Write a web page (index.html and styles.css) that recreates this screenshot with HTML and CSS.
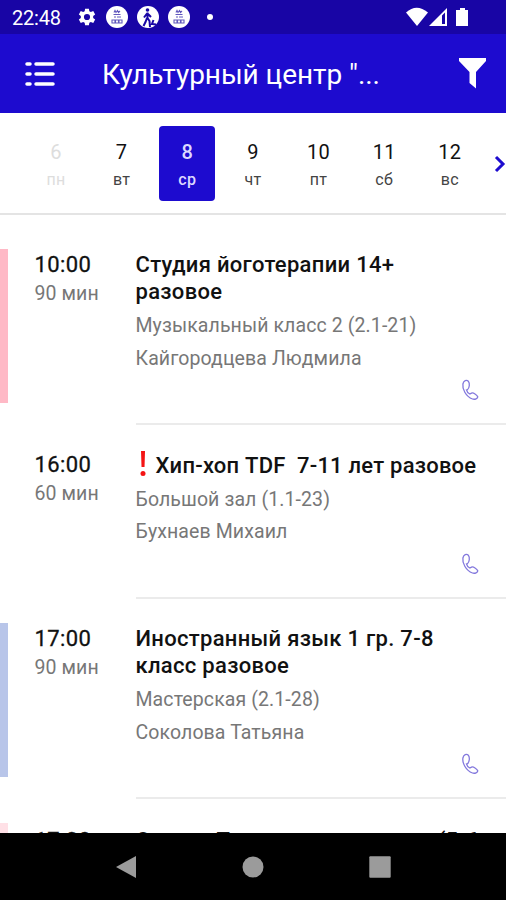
FILE: index.html
```html
<!DOCTYPE html>
<html lang="ru">
<head>
<meta charset="utf-8">
<title>Расписание</title>
<link rel="stylesheet" href="styles.css">
</head>
<body>
<svg class="defs" aria-hidden="true">
  <symbol id="phone" viewBox="0 0 18 22"><path d="M6.200 11C8.600 9 9 4.500 7.300 2.200C5.600.4 2.600 1.600 1.900 5C1.200 9.500 4.500 17.500 11.500 20C14 20.800 16.800 19.400 16.800 17.800C15.800 15.800 12.500 13.400 10.500 14.100L8.800 15C7.200 14.300 5.800 12.500 5.200 10.400" /></symbol>
  <symbol id="badge" viewBox="0 0 22 22"><circle cx="11" cy="11" r="11" fill="#fff"/><path d="M8 6.500l1-2 1 2 1.500-2 1 2 1.500-1.500M7.500 8.500h7M8 11h2m1 0h4M6 14h3v3H6zm3.500 0h3v3h-3zm3.500 0h3v3h-3z"/></symbol>
</svg>
<div class="screen">
  <div class="status">
    <span class="clock">22:48</span>
    <svg class="gear" viewBox="0 0 24 24"><path fill-rule="evenodd" d="M9.700 2h4.600l.5 3 1.800 1 2.900-1.100 2.300 4-2.400 1.900v2.400l2.400 1.900-2.300 4-2.900-1.100-1.800 1-.5 3H9.700l-.5-3-1.800-1-2.900 1.100-2.300-4 2.400-1.900v-2.400L2.200 8.900l2.300-4L7.400 6l1.800-1zM12 8.300a3.700 3.700 0 1 0 0 7.400 3.700 3.700 0 0 0 0-7.400z"/></svg>
    <svg class="badge"><use href="#badge"/></svg>
    <svg class="badge" viewBox="0 0 22 22"><circle cx="11" cy="11" r="11" fill="#fff"/><circle class="ink" cx="10.500" cy="4" r="1.800"/><path class="walker" d="M10.500 6.500v5.500l2 3 .5 6M10 12l-1.500 4-2 4M10 7.500l-3 4M11 8l3 3M16.500 14l-1.500 4 4 .5"/></svg>
    <svg class="badge"><use href="#badge"/></svg>
    <i class="dot"></i>
    <svg class="signals" viewBox="0 0 64 20"><path d="M0 5.500Q10.500-4.200 22 5.500L11 19z"/><path fill-rule="evenodd" d="M23 19L41 1v18zM36 8.500V17h3V5.500z"/><path d="M51 3h3V1h5v2h3v16H50V3z"/></svg>
  </div>
  <header class="bar">
    <svg class="menu" viewBox="0 0 30 24"><path d="M2 2h3M11 2h17M2 12h3M11 12h17M2 22h3M11 22h17"/></svg>
    <h1>Культурный центр "...</h1>
    <svg class="filter" viewBox="0 0 27 31"><path d="M0 0h27v3L17 14v16.500L10.500 25V14L0 3z"/></svg>
  </header>
  <nav class="days">
    <div class="day off"><b>6</b><span>пн</span></div>
    <div class="day"><b>7</b><span>вт</span></div>
    <div class="day on"><b>8</b><span>ср</span></div>
    <div class="day"><b>9</b><span>чт</span></div>
    <div class="day"><b>10</b><span>пт</span></div>
    <div class="day"><b>11</b><span>сб</span></div>
    <div class="day"><b>12</b><span>вс</span></div>
    <svg class="next" viewBox="0 0 12 18"><path d="M2 2l7 7-7 7"/></svg>
  </nav>
  <main class="list">
    <article class="item">
      <i class="mark pink"></i>
      <div class="when"><time>10:00</time><span>90 мин</span></div>
      <div class="info"><h2>Студия йоготерапии 14+<br>разовое</h2><p>Музыкальный класс 2 (2.1-21)</p><p>Кайгородцева Людмила</p><svg class="phone"><use href="#phone"/></svg></div>
    </article>
    <article class="item">
      <i class="mark"></i>
      <div class="when"><time>16:00</time><span>60 мин</span></div>
      <div class="info"><h2 class="flagged"><svg class="alert" viewBox="0 0 6 25"><path d="M1 0h4l-.5 16h-3z"/><circle cx="3" cy="22.500" r="2.500"/></svg>Хип-хоп TDF&nbsp; 7-11 лет разовое</h2><p>Большой зал (1.1-23)</p><p>Бухнаев Михаил</p><svg class="phone"><use href="#phone"/></svg></div>
    </article>
    <article class="item">
      <i class="mark blue"></i>
      <div class="when"><time>17:00</time><span>90 мин</span></div>
      <div class="info"><h2>Иностранный язык 1 гр. 7-8<br>класс разовое</h2><p>Мастерская (2.1-28)</p><p>Соколова Татьяна</p><svg class="phone"><use href="#phone"/></svg></div>
    </article>
    <article class="item last">
      <i class="mark rose"></i>
      <div class="when"><time>17:30</time></div>
      <div class="info"><h2 class="spread"><span>Студия Танца</span><span>(5-6</span></h2></div>
    </article>
  </main>
  <footer class="system">
    <svg viewBox="0 0 22 24"><path d="M21 1v22L1 12z"/></svg>
    <svg viewBox="0 0 22 24"><circle cx="11" cy="12" r="10.500"/></svg>
    <svg viewBox="0 0 22 24"><rect x=".3" y="1.300" width="21.400" height="21.400" rx="1"/></svg>
  </footer>
</div>
</body>
</html>
```
FILE: styles.css
```css
* { box-sizing: border-box; }
body { margin: 0; font-family: Roboto, "Liberation Sans", sans-serif; color: #111; background: #fff; }
h1, h2, p { margin: 0; font-weight: 400; }
svg { display: block; flex: none; }
.defs { position: absolute; width: 0; height: 0; }
.screen { width: 506px; height: 900px; display: flex; flex-direction: column; overflow: hidden; }

.status { height: 34px; flex: none; background: #1805a5; color: #fff; display: flex; align-items: center; padding-left: 12px; }
.clock { width: 65px; font-size: 20px; letter-spacing: -0.2px; line-height: 36px; padding-top: 2px; }
.gear { width: 20px; height: 20px; fill: #fff; margin-right: 9px; }
.badge { width: 22px; height: 22px; margin-right: 9px; }
#badge path { fill: none; stroke: #6158bd; stroke-width: 1.1; }
.badge .ink { fill: #1805a5; }
.badge .walker { fill: none; stroke: #1805a5; stroke-width: 2; }
.dot { width: 6px; height: 6px; border-radius: 3px; background: #fff; margin-left: 8px; }
.signals { width: 64px; height: 20px; margin-left: auto; margin-right: 36px; fill: #fff; }

.bar { height: 79px; flex: none; background: #1d0bcf; color: #fff; display: flex; align-items: center; padding: 0 20px 0 25px; }
.menu { width: 30px; height: 24px; fill: none; stroke: #fff; stroke-width: 3.500; stroke-linecap: round; }
.bar h1 { margin-left: 47px; font-size: 28px; line-height: 40px; padding-top: 2px; letter-spacing: -.05px; white-space: nowrap; }
.filter { width: 27px; height: 31px; margin-left: auto; fill: #fff; }

.days { height: 102px; flex: none; display: flex; gap: 9.650px; padding: 13px 0 0 28px; border-bottom: 2px solid #e4e4e4; }
.day { width: 56px; height: 75px; flex: none; border-radius: 4px; display: flex; flex-direction: column; align-items: center; padding-top: 13px; }
.day b { font-size: 20px; line-height: 26px; font-weight: 400; letter-spacing: .3px; }
.day span { font-size: 16px; line-height: 30px; color: #444; letter-spacing: .3px; }
.day.off b, .day.off span { color: #ddd; }
.day.on { background: #1d0bcf; }
.day.on b, .day.on span { color: #dcd8ff; font-weight: 500; }
.next { width: 12px; height: 18px; margin: 29px 0 0 6.500px; fill: none; stroke: #1d0bcf; stroke-width: 3; }

.list { flex: 1; min-height: 0; overflow: hidden; padding-top: 9.500px; }
.item { display: flex; align-items: stretch; }
.mark { width: 7.500px; margin: 24px 0 22px; }
.pink { background: #ffb9c6; }
.blue { background: #b8c5e9; }
.rose { background: #ffe0e6; }
.when { width: 128px; padding: 26px 0 0 27px; display: flex; flex-direction: column; }
.when time { font-size: 22px; line-height: 28px; letter-spacing: .4px; -webkit-text-stroke: .3px #111; }
.when span { font-size: 19.500px; line-height: 29px; color: #777; letter-spacing: .1px; }
.info { flex: 1; padding-top: 26.500px; border-bottom: 2.500px solid #ebebeb; }
.info h2 { font-size: 22px; line-height: 27px; font-weight: 500; letter-spacing: .3px; color: #111; margin-bottom: 5px; white-space: nowrap; }
.info .flagged { letter-spacing: .22px; }
.info p { font-size: 19.500px; line-height: 32.500px; color: #777; letter-spacing: .1px; }
.phone { width: 18px; height: 22px; margin: 4px 27px 22px auto; fill: none; stroke: #8378dd; stroke-width: 1.300; }
.alert { width: 6px; height: 25px; display: inline-block; vertical-align: -3px; margin: -3px 10px 0 4px; fill: #f41414; }
.last .when, .last .info { padding-top: 27.500px; }
.info .spread { display: flex; justify-content: space-between; padding-right: 27px; }

.system { height: 67px; flex: none; background: #000; display: flex; justify-content: center; align-items: center; gap: 105px; }
.system svg { width: 22px; height: 24px; fill: #9b9b9b; }
```
